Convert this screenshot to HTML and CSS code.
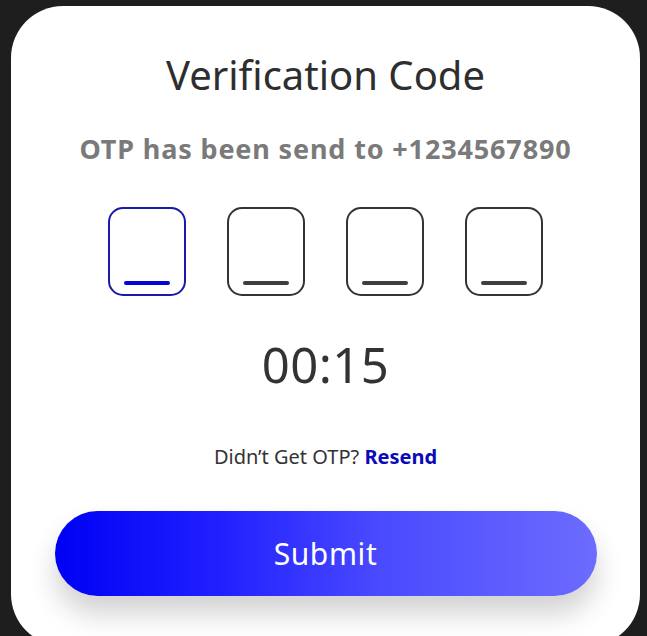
FILE: index.html
```html
<!DOCTYPE html>
<html>
<head>
<meta charset="utf-8">
<link rel="stylesheet" href="styles.css">
</head>
<body>
<div class="card">
  <h1 class="title">Verification Code</h1>
  <p class="subtitle">OTP has been send to +1234567890</p>
  <div class="otp">
    <div class="box box-active"><span class="dash"></span></div>
    <div class="box"><span class="dash"></span></div>
    <div class="box"><span class="dash"></span></div>
    <div class="box"><span class="dash"></span></div>
  </div>
  <div class="timer">00:15</div>
  <p class="resend">Didn’t Get OTP? <a class="resend-link">Resend</a></p>
  <button class="submit">Submit</button>
</div>
</body>
</html>
```

FILE: styles.css
```css
html, body {
  margin: 0;
  padding: 0;
  background: #1e1e1e;
  height: 636px;
  overflow: hidden;
}
body {
  font-family: "Noto Sans", "Open Sans", sans-serif;
  padding: 6px 7px 0 11px;
}
.card {
  width: 629px;
  height: 640px;
  background: #ffffff;
  border-radius: 52px;
  display: flex;
  flex-direction: column;
  align-items: center;
  box-sizing: border-box;
  padding-top: 45px;
}
.title {
  margin: 0;
  font-size: 40px;
  line-height: 48px;
  font-weight: 400;
  color: #2e2e2e;
}
.subtitle {
  margin: 33px 0 0;
  font-size: 27px;
  line-height: 34px;
  font-weight: 700;
  letter-spacing: 0.85px;
  color: #7a7a7a;
}
.otp {
  display: flex;
  gap: 41px;
  margin-top: 41px;
}
.box {
  width: 78px;
  height: 89px;
  box-sizing: border-box;
  border: 2px solid #333333;
  border-radius: 15px;
  display: flex;
  justify-content: center;
  align-items: flex-end;
  padding-bottom: 9px;
}
.dash {
  width: 46px;
  height: 4px;
  border-radius: 2px;
  background: #3e3e3e;
}
.box-active {
  border-color: #1a1aa8;
}
.box-active .dash {
  background: #0505d8;
}
.timer {
  margin-top: 40px;
  font-size: 49px;
  line-height: 56px;
  letter-spacing: 0.5px;
  color: #333333;
}
.resend {
  margin: 53px 0 0;
  font-size: 20px;
  line-height: 24px;
  color: #333333;
}
.resend-link {
  font-weight: 700;
  color: #0a0ab8;
}
.submit {
  margin-top: 42px;
  width: 542px;
  height: 85px;
  border: none;
  border-radius: 43px;
  background: linear-gradient(90deg, #0000f5 0%, #2020ff 30%, #4a4aff 60%, #6c6cff 100%);
  color: #ffffff;
  font-family: "Noto Sans", sans-serif;
  font-size: 30px;
  letter-spacing: 0.6px;
  box-shadow: 0 18px 28px rgba(0, 0, 0, 0.18);
}
```
